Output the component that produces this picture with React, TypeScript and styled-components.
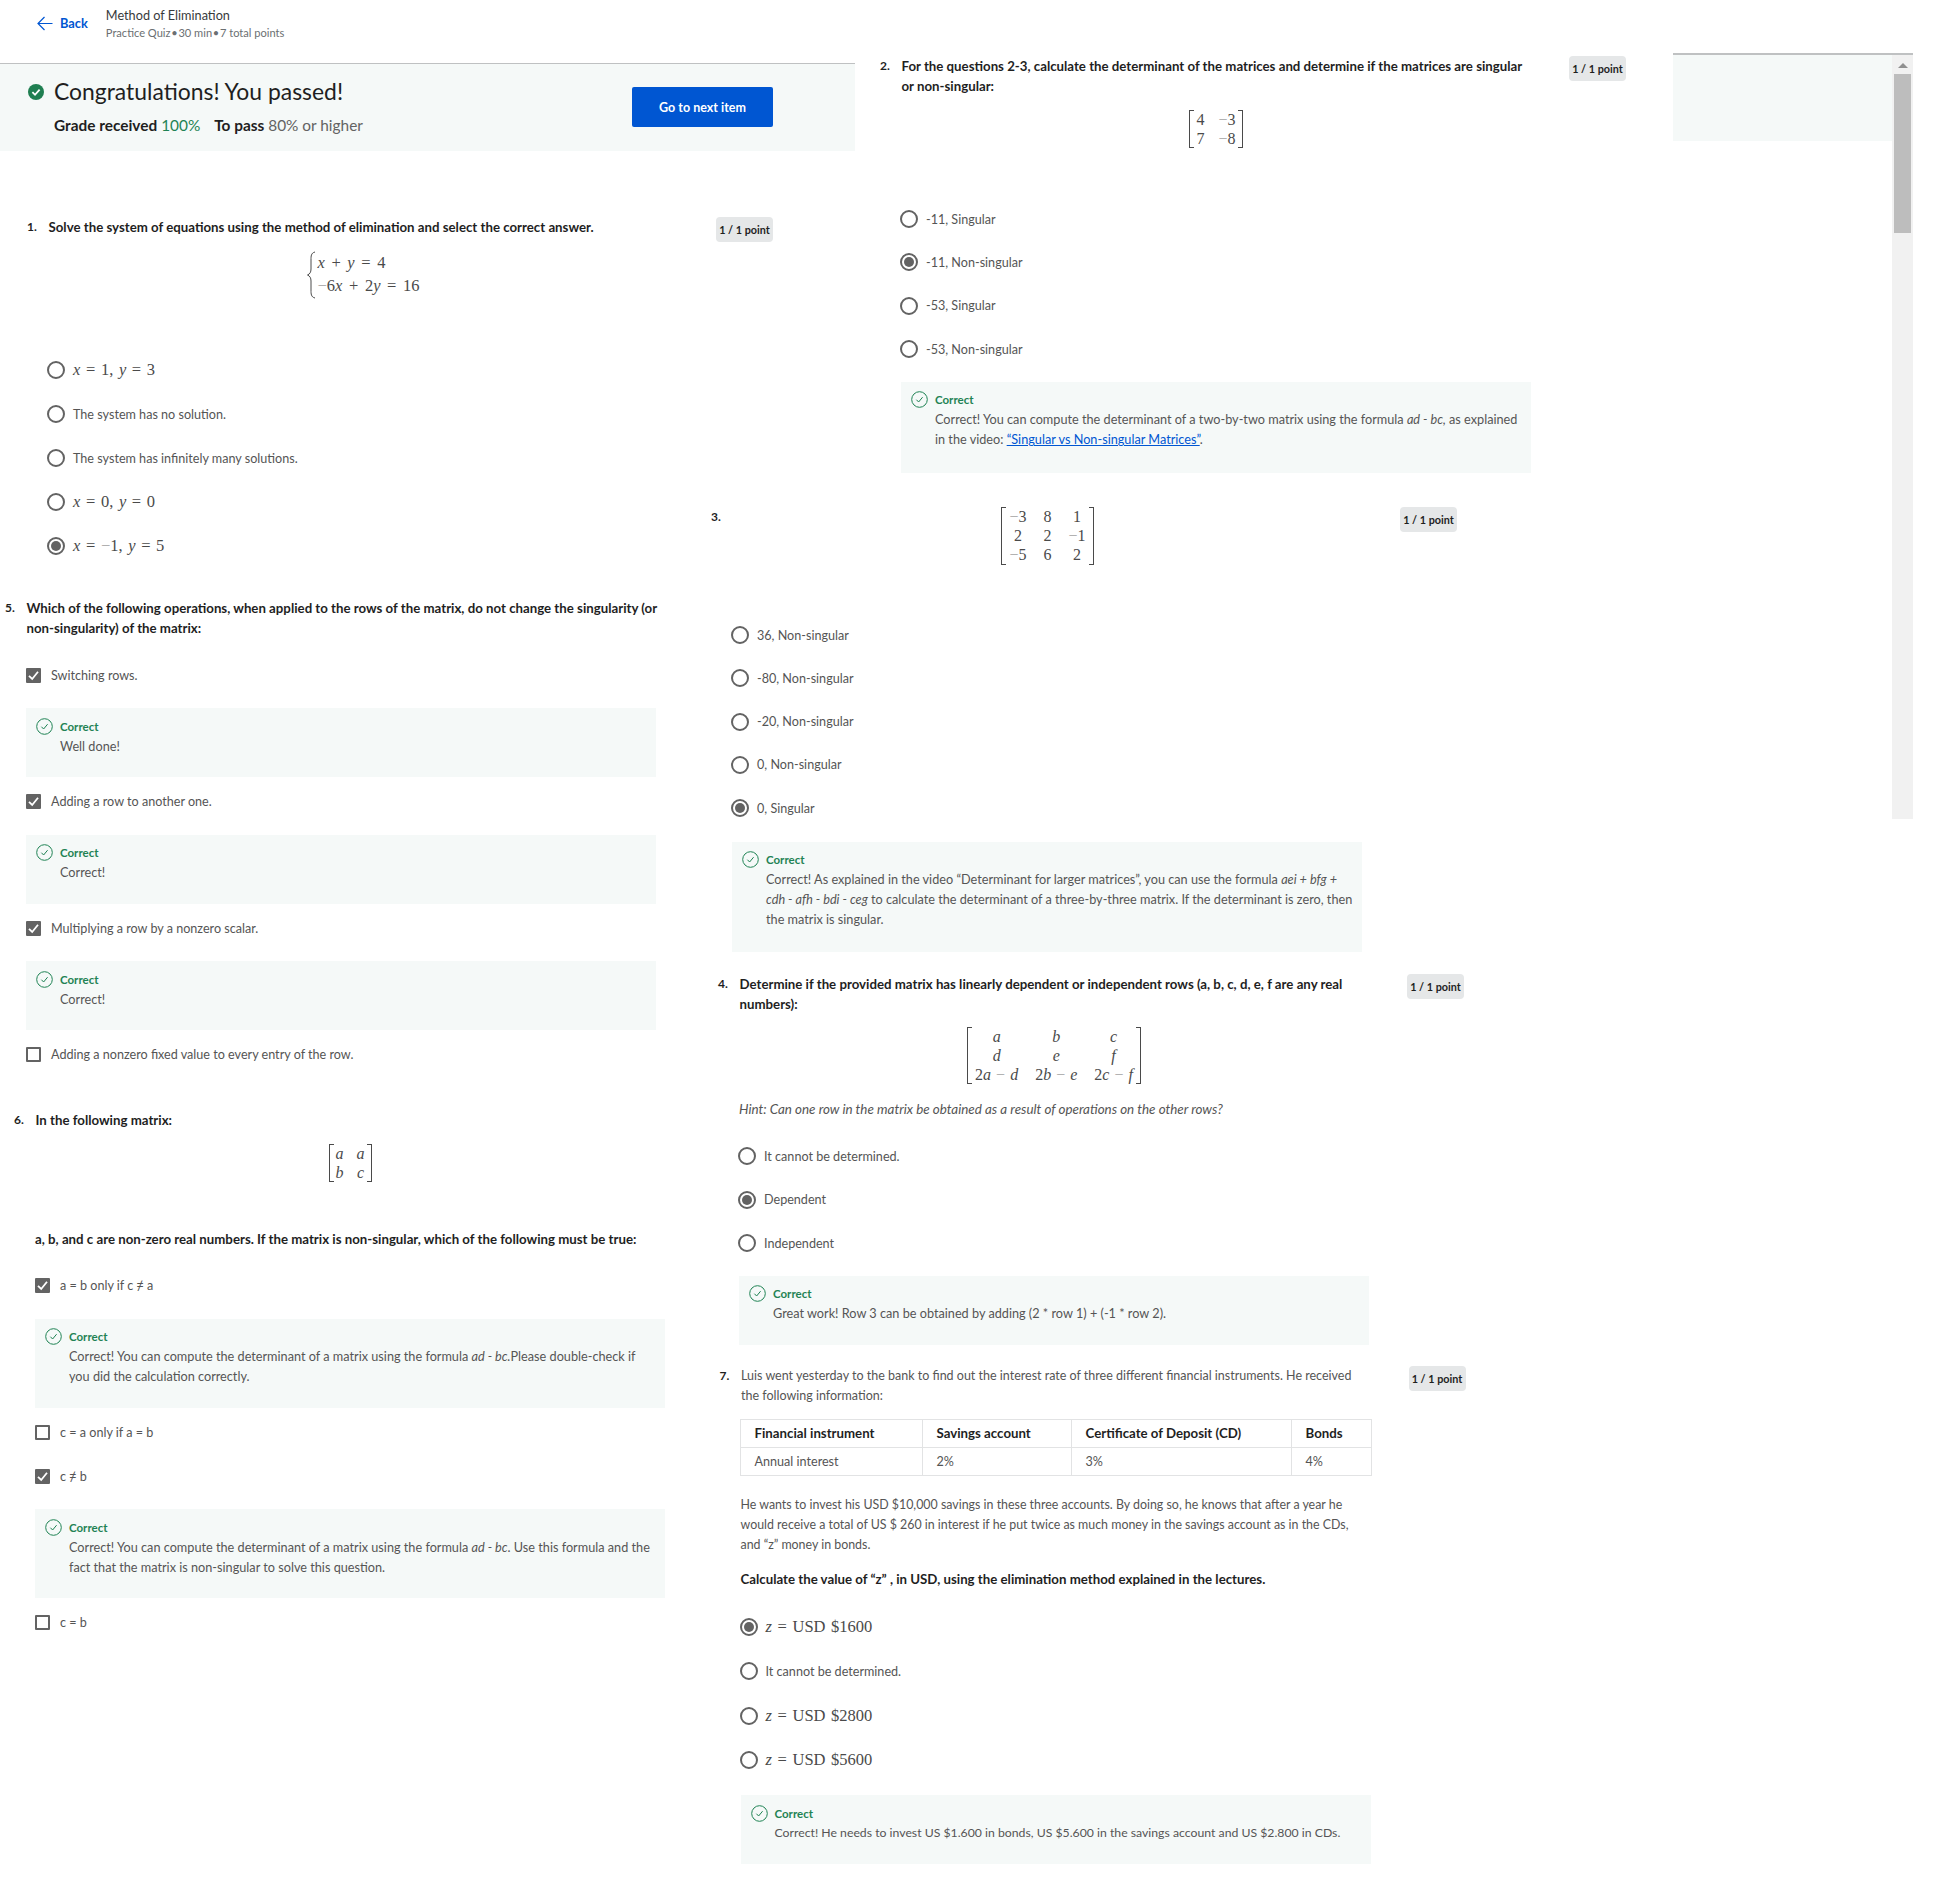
import React from "react";
import styled, { createGlobalStyle } from "styled-components";

const GlobalStyle = createGlobalStyle`
  html, body {
    margin: 0;
    padding: 0;
    background: #fff;
  }
  body {
    font-family: "Lato", "Noto Sans", sans-serif;
    font-size: 12.6px;
    color: #555;
  }
  * {
    box-sizing: border-box;
  }
`;

const Page = styled.div`
  display: flex;
  width: 1946px;
  min-height: 1884px;
  overflow: hidden;
`;

const LeftColumn = styled.div`
  flex: 0 0 700px;
  width: 700px;
`;

const RightColumn = styled.div`
  flex: 0 0 973px;
  width: 973px;
  padding-top: 56px;
`;

const SidePanel = styled.div`
  flex: 0 0 240px;
  display: flex;
  align-items: flex-start;
  height: 766px;
  margin-top: 53px;
  border-top: 2px solid #bfc1c2;
`;

const SideTint = styled.div`
  flex: 1;
  height: 86px;
  background: #f5f9f8;
`;

const ScrollTrack = styled.div`
  flex: 0 0 21px;
  height: 100%;
  padding: 6px 2px 0;
  background: #f1f1f1;
`;

const ScrollArrow = styled.div`
  width: 0;
  height: 0;
  margin: 2px auto 6px;
  border-left: 5px solid transparent;
  border-right: 5px solid transparent;
  border-bottom: 5px solid #8f8f8f;
`;

const ScrollThumb = styled.div`
  height: 159px;
  background: #bdbdbd;
`;

const TopBar = styled.div`
  display: flex;
  align-items: flex-start;
  width: 855px;
  height: 64px;
  padding: 6px 0 0 37px;
  border-bottom: 1px solid #bfc1c2;
`;

const BackLink = styled.div`
  display: flex;
  align-items: center;
  gap: 7px;
  height: 34px;
  color: #0056d2;
  font-weight: 700;
  font-size: 12.8px;
`;

const CourseInfo = styled.div`
  margin-left: 18px;
`;

const CourseTitle = styled.div`
  color: #373a3c;
  font-size: 12.7px;
  line-height: 18px;
`;

const CourseMeta = styled.div`
  color: #6b6f72;
  font-size: 11.1px;
  line-height: 18px;
`;

const PassBand = styled.div`
  display: flex;
  justify-content: space-between;
  align-items: flex-start;
  width: 855px;
  height: 87px;
  padding: 14px 82px 0 28px;
  background: #f5f9f8;
`;

const PassHeading = styled.div`
  display: flex;
  align-items: center;
  gap: 10px;
  height: 26px;
  color: #1f1f1f;
  font-size: 22.9px;
`;

const PassIconSlot = styled.span`
  display: flex;
  margin-top: 1px;
`;

const PassStats = styled.div`
  margin: 10px 0 0 26px;
  font-size: 15.4px;
  line-height: 22px;
  color: #636363;

  b {
    font-weight: 700;
    color: #1f1f1f;
  }

  em {
    font-style: normal;
    color: #1f8354;
    margin-right: 10px;
  }
`;

const NextButton = styled.div`
  display: flex;
  justify-content: center;
  align-items: center;
  width: 141px;
  height: 40px;
  margin-top: 9px;
  border-radius: 2px;
  background: #0056d2;
  color: #fff;
  font-weight: 700;
  font-size: 12.5px;
`;

const Question = styled.div<{ $left: number; $top: number }>`
  width: 746px;
  margin-left: ${(p) => p.$left}px;
  margin-top: ${(p) => p.$top}px;
`;

const Head = styled.div`
  display: flex;
  align-items: flex-start;
`;

const Number = styled.div`
  flex: 0 0 21.5px;
  color: #1f1f1f;
  font-weight: 700;
  font-size: 12px;
  line-height: 20px;
`;

const Title = styled.div<{ $plain?: boolean }>`
  flex: 0 0 630px;
  color: ${(p) => (p.$plain ? "#555" : "#1f1f1f")};
  font-weight: ${(p) => (p.$plain ? 400 : 700)};
  font-size: ${(p) => (p.$plain ? 12.5 : 13.25)}px;
  line-height: 20px;
  white-space: nowrap;
`;

const Points = styled.div`
  display: flex;
  justify-content: center;
  align-items: center;
  width: 57px;
  height: 25px;
  margin-left: auto;
  border-radius: 4px;
  background: #e5e7e8;
  color: #1f1f1f;
  font-weight: 700;
  font-size: 10.8px;
`;

const Body = styled.div`
  width: 630px;
  margin-left: 21px;
`;

const MathBlock = styled.div<{ $top: number }>`
  display: flex;
  justify-content: center;
  margin-top: ${(p) => p.$top}px;
`;

const MatrixWrap = styled.div`
  display: flex;
  align-items: stretch;
  color: #4a4a4a;
  font-family: "Liberation Serif", serif;
  font-size: 16px;
  font-weight: 400;
`;

const Bracket = styled.span<{ $side: "left" | "right" }>`
  flex: 0 0 5px;
  border: 1px solid #4a4a4a;
  border-${(p) => (p.$side === "left" ? "right" : "left")}: none;
`;

const MatrixGrid = styled.div<{ $cols: number; $gap: number; $pad: number }>`
  display: grid;
  grid-template-columns: repeat(${(p) => p.$cols}, auto);
  column-gap: ${(p) => p.$gap}px;
  padding: 0 ${(p) => p.$pad}px;
  justify-items: center;
  line-height: 19.2px;
  word-spacing: 1px;
  white-space: nowrap;
`;

const Var = styled.i`
  font-style: italic;
`;

const Minus = styled.span`
  color: #a8a8a8;
`;

const NotEqual = styled.span`
  font-family: "Noto Sans", sans-serif;
`;

const CasesWrap = styled.div`
  display: flex;
  align-items: stretch;
  gap: 1px;
  color: #4a4a4a;
  font-family: "Liberation Serif", serif;
  font-size: 16.5px;
  line-height: 23px;
  word-spacing: 2.5px;
  white-space: nowrap;
`;

const Options = styled.div<{ $top: number; $step: number }>`
  margin-top: ${(p) => p.$top}px;

  & > div {
    height: ${(p) => p.$step}px;
  }
`;

const OptionRow = styled.div`
  display: flex;
  align-items: center;
  gap: 8px;
  margin-left: -1px;
`;

const RadioMark = styled.span<{ $on?: boolean }>`
  display: flex;
  justify-content: center;
  align-items: center;
  flex: 0 0 18px;
  height: 18px;
  border: 2px solid #636363;
  border-radius: 50%;

  &::after {
    content: "";
    display: ${(p) => (p.$on ? "block" : "none")};
    width: 10px;
    height: 10px;
    border-radius: 50%;
    background: #636363;
  }
`;

const MathLabel = styled.span`
  color: #4a4a4a;
  font-family: "Liberation Serif", serif;
  font-size: 16.5px;
  word-spacing: 1.5px;
  white-space: nowrap;
`;

const CheckRow = styled.div<{ $top?: number; $bottom?: number }>`
  display: flex;
  align-items: center;
  gap: 10px;
  height: 20px;
  margin-top: ${(p) => p.$top ?? 0}px;
  margin-bottom: ${(p) => p.$bottom ?? 23}px;
`;

const CheckMark = styled.span<{ $on?: boolean }>`
  display: flex;
  justify-content: center;
  align-items: center;
  flex: 0 0 15px;
  height: 15px;
  border-radius: 1px;
  border: 2px solid #636363;
  background: ${(p) => (p.$on ? "#636363" : "#fff")};
`;

const Feedback = styled.div<{ $top?: number; $bottom?: number; $tail?: number }>`
  display: grid;
  grid-template-columns: 17px 1fr;
  column-gap: 7px;
  width: 630px;
  margin-top: ${(p) => p.$top ?? 0}px;
  margin-bottom: ${(p) => p.$bottom ?? 14.5}px;
  padding: 8.5px 10px ${(p) => p.$tail ?? 21.5}px;
  background: #f5f9f8;
`;

const IconSlot = styled.span`
  display: flex;
  margin-top: 1px;
`;

const CorrectLabel = styled.div`
  color: #1f8354;
  font-weight: 700;
  font-size: 11.5px;
  line-height: 19px;
`;

const FeedbackText = styled.div<{ $size?: number }>`
  grid-column: 2;
  font-size: ${(p) => p.$size ?? 12.7}px;
  line-height: 20px;
  white-space: nowrap;

  a {
    color: #0056d2;
    text-decoration: underline;
  }
`;

const Prompt = styled.div<{ $top: number; $bold?: boolean; $italic?: boolean }>`
  margin-top: ${(p) => p.$top}px;
  color: ${(p) => (p.$bold ? "#1f1f1f" : "#555")};
  font-weight: ${(p) => (p.$bold ? 700 : 400)};
  font-style: ${(p) => (p.$italic ? "italic" : "normal")};
  font-size: ${(p) => (p.$bold ? 13.25 : p.$italic ? 13.4 : 12.4)}px;
  line-height: 20px;
  white-space: nowrap;
`;

const InfoTable = styled.table`
  width: 631px;
  margin-top: 13px;
  margin-left: -1px;
  border-collapse: collapse;
  table-layout: fixed;

  th,
  td {
    height: 28px;
    padding: 0 14px;
    border: 1px solid #e2e3e4;
    text-align: left;
    white-space: nowrap;
  }

  th {
    color: #1f1f1f;
    font-weight: 700;
    font-size: 13.25px;
  }
`;

const BackArrow = () => (
  <svg width="16" height="15" viewBox="0 0 16 15" fill="none" stroke="#0056d2" strokeWidth="1.2">
    <path d="M15.5 7.5H1M7.5 1L1 7.5L7.5 14" />
  </svg>
);

const PassIcon = () => (
  <svg width="16" height="16" viewBox="0 0 16 16">
    <circle cx="8" cy="8" r="8" fill="#1f7f51" />
    <path d="M4.4 8.2L7 10.8L11.6 5.6" fill="none" stroke="#fff" strokeWidth="1.8" />
  </svg>
);

const CorrectIcon = () => (
  <svg width="17" height="17" viewBox="0 0 17 17" fill="none" stroke="#1f8354">
    <circle cx="8.5" cy="8.5" r="7.8" strokeWidth="1" />
    <path d="M5.4 8.7L7.6 11L11.6 6.2" strokeWidth="1" />
  </svg>
);

const TickIcon = () => (
  <svg width="11" height="11" viewBox="0 0 11 11" fill="none" stroke="#fff" strokeWidth="1.8">
    <path d="M1 5.8L4.2 9L10 1.8" />
  </svg>
);

const BraceIcon = () => (
  <svg width="10" height="48" viewBox="0 0 10 48" fill="none" stroke="#4a4a4a" strokeWidth="1">
    <path d="M9 1C5 2 5 5 5 9V18C5 21 4 23 1.5 24C4 25 5 27 5 30V39C5 43 5 46 9 47" />
  </svg>
);

const Radio = ({ on, children }: { on?: boolean; children: React.ReactNode }) => (
  <OptionRow>
    <RadioMark $on={on} />
    {children}
  </OptionRow>
);

const Check = ({
  on,
  top,
  bottom,
  children,
}: {
  on?: boolean;
  top?: number;
  bottom?: number;
  children: React.ReactNode;
}) => (
  <CheckRow $top={top} $bottom={bottom}>
    <CheckMark $on={on}>{on && <TickIcon />}</CheckMark>
    <span>{children}</span>
  </CheckRow>
);

const Correct = ({
  top,
  bottom,
  size,
  tail,
  children,
}: {
  top?: number;
  bottom?: number;
  size?: number;
  tail?: number;
  children: React.ReactNode;
}) => (
  <Feedback $top={top} $bottom={bottom} $tail={tail}>
    <IconSlot>
      <CorrectIcon />
    </IconSlot>
    <CorrectLabel>Correct</CorrectLabel>
    <FeedbackText $size={size}>{children}</FeedbackText>
  </Feedback>
);

const Matrix = ({
  cols,
  gap,
  pad,
  cells,
}: {
  cols: number;
  gap: number;
  pad: number;
  cells: React.ReactNode[];
}) => (
  <MatrixWrap>
    <Bracket $side="left" />
    <MatrixGrid $cols={cols} $gap={gap} $pad={pad}>
      {cells.map((cell, index) => (
        <span key={index}>{cell}</span>
      ))}
    </MatrixGrid>
    <Bracket $side="right" />
  </MatrixWrap>
);

const neg = (value: string) => (
  <>
    <Minus>−</Minus>
    {value}
  </>
);

const App = () => {
  return (
    <Page>
      <GlobalStyle />
      <LeftColumn>
        <TopBar>
          <BackLink>
            <BackArrow />
            Back
          </BackLink>
          <CourseInfo>
            <CourseTitle>Method of Elimination</CourseTitle>
            <CourseMeta>Practice Quiz{"\u200a"}•{"\u200a"}30 min{"\u200a"}•{"\u200a"}7 total points</CourseMeta>
          </CourseInfo>
        </TopBar>
        <PassBand>
          <div>
            <PassHeading>
              <PassIconSlot>
                <PassIcon />
              </PassIconSlot>
              Congratulations! You passed!
            </PassHeading>
            <PassStats>
              <b>Grade received</b> <em>100%</em> <b>To pass</b> 80% or higher
            </PassStats>
          </div>
          <NextButton>Go to next item</NextButton>
        </PassBand>

        <Question $left={27} $top={66}>
          <Head>
            <Number>1.</Number>
            <Title>Solve the system of equations using the method of elimination and select the correct answer.</Title>
            <Points>1 / 1 point</Points>
          </Head>
          <Body>
            <MathBlock $top={9}>
              <CasesWrap>
                <BraceIcon />
                <div>
                  <Var>x</Var> + <Var>y</Var> = 4
                  <br />
                  <Minus>−</Minus>6<Var>x</Var> + 2<Var>y</Var> = 16
                </div>
              </CasesWrap>
            </MathBlock>
            <Options $top={49} $step={44}>
              <Radio>
                <MathLabel>
                  <Var>x</Var> = 1, <Var>y</Var> = 3
                </MathLabel>
              </Radio>
              <Radio>The system has no solution.</Radio>
              <Radio>The system has infinitely many solutions.</Radio>
              <Radio>
                <MathLabel>
                  <Var>x</Var> = 0, <Var>y</Var> = 0
                </MathLabel>
              </Radio>
              <Radio on>
                <MathLabel>
                  <Var>x</Var> = <Minus>−</Minus>1, <Var>y</Var> = 5
                </MathLabel>
              </Radio>
            </Options>
          </Body>
        </Question>

        <Question $left={5} $top={30}>
          <Head>
            <Number>5.</Number>
            <Title>
              Which of the following operations, when applied to the rows of the matrix, do not change the singularity (or
              <br />
              non-singularity) of the matrix:
            </Title>
          </Head>
          <Body>
            <Check on top={27}>
              Switching rows.
            </Check>
            <Correct>Well done!</Correct>
            <Check on>Adding a row to another one.</Check>
            <Correct>Correct!</Correct>
            <Check on>Multiplying a row by a nonzero scalar.</Check>
            <Correct>Correct!</Correct>
            <Check bottom={0}>Adding a nonzero fixed value to every entry of the row.</Check>
          </Body>
        </Question>

        <Question $left={14} $top={45}>
          <Head>
            <Number>6.</Number>
            <Title>In the following matrix:</Title>
          </Head>
          <Body>
            <MathBlock $top={14}>
              <Matrix
                cols={2}
                gap={13}
                pad={2}
                cells={[<Var>a</Var>, <Var>a</Var>, <Var>b</Var>, <Var>c</Var>]}
              />
            </MathBlock>
            <Prompt $top={47} $bold>
              a, b, and c are non-zero real numbers. If the matrix is non-singular, which of the following must be true:
            </Prompt>
            <Check on top={27}>
              a = b only if c <NotEqual>≠</NotEqual> a
            </Check>
            <Correct>
              Correct! You can compute the determinant of a matrix using the formula <Var>ad - bc.</Var>Please double-check if
              <br />
              you did the calculation correctly.
            </Correct>
            <Check bottom={24}>c = a only if a = b</Check>
            <Check on>
              c <NotEqual>≠</NotEqual> b
            </Check>
            <Correct>
              Correct! You can compute the determinant of a matrix using the formula <Var>ad - bc</Var>. Use this formula and the
              <br />
              fact that the matrix is non-singular to solve this question.
            </Correct>
            <Check bottom={0}>c = b</Check>
          </Body>
        </Question>
      </LeftColumn>

      <RightColumn>
        <Question $left={180} $top={0}>
          <Head>
            <Number>2.</Number>
            <Title>
              For the questions 2-3, calculate the determinant of the matrices and determine if the matrices are singular
              <br />
              or non-singular:
            </Title>
            <Points>1 / 1 point</Points>
          </Head>
          <Body>
            <MathBlock $top={14}>
              <Matrix cols={2} gap={14} pad={2} cells={["4", neg("3"), "7", neg("8")]} />
            </MathBlock>
            <Options $top={49} $step={43.4}>
              <Radio>-11, Singular</Radio>
              <Radio on>-11, Non-singular</Radio>
              <Radio>-53, Singular</Radio>
              <Radio>-53, Non-singular</Radio>
            </Options>
            <Correct top={11} bottom={0} tail={23.5}>
              Correct! You can compute the determinant of a two-by-two matrix using the formula <Var>ad - bc,</Var> as explained
              <br />
              in the video: <a href="#video">“Singular vs Non-singular Matrices”</a>.
            </Correct>
          </Body>
        </Question>

        <Question $left={11} $top={34}>
          <Head>
            <Number>3.</Number>
            <Title>
              <MathBlock $top={0}>
                <Matrix
                  cols={3}
                  gap={17}
                  pad={3}
                  cells={[neg("3"), "8", "1", "2", "2", neg("1"), neg("5"), "6", "2"]}
                />
              </MathBlock>
            </Title>
            <Points>1 / 1 point</Points>
          </Head>
          <Body>
            <Options $top={49} $step={43.25}>
              <Radio>36, Non-singular</Radio>
              <Radio>-80, Non-singular</Radio>
              <Radio>-20, Non-singular</Radio>
              <Radio>0, Non-singular</Radio>
              <Radio on>0, Singular</Radio>
            </Options>
            <Correct top={12} bottom={0} tail={22.5}>
              Correct! As explained in the video “Determinant for larger matrices”, you can use the formula <Var>aei + bfg +</Var>
              <br />
              <Var>cdh - afh - bdi - ceg</Var> to calculate the determinant of a three-by-three matrix. If the determinant is zero, then
              <br />
              the matrix is singular.
            </Correct>
          </Body>
        </Question>

        <Question $left={18} $top={22}>
          <Head>
            <Number>4.</Number>
            <Title>
              Determine if the provided matrix has linearly dependent or independent rows (a, b, c, d, e, f are any real
              <br />
              numbers):
            </Title>
            <Points>1 / 1 point</Points>
          </Head>
          <Body>
            <MathBlock $top={13}>
              <Matrix
                cols={3}
                gap={17}
                pad={3}
                cells={[
                  <Var>a</Var>,
                  <Var>b</Var>,
                  <Var>c</Var>,
                  <Var>d</Var>,
                  <Var>e</Var>,
                  <Var>f</Var>,
                  <>
                    2<Var>a</Var> <Minus>−</Minus> <Var>d</Var>
                  </>,
                  <>
                    2<Var>b</Var> <Minus>−</Minus> <Var>e</Var>
                  </>,
                  <>
                    2<Var>c</Var> <Minus>−</Minus> <Var>f</Var>
                  </>,
                ]}
              />
            </MathBlock>
            <Prompt $top={15} $italic>
              Hint: Can one row in the matrix be obtained as a result of operations on the other rows?
            </Prompt>
            <Options $top={15} $step={43.5}>
              <Radio>It cannot be determined.</Radio>
              <Radio on>Dependent</Radio>
              <Radio>Independent</Radio>
            </Options>
            <Correct top={11} bottom={0}>
              Great work! Row 3 can be obtained by adding (2 * row 1) + (-1 * row 2).
            </Correct>
          </Body>
        </Question>

        <Question $left={19.5} $top={21}>
          <Head>
            <Number>7.</Number>
            <Title $plain>
              Luis went yesterday to the bank to find out the interest rate of three different financial instruments. He received
              <br />
              the following information:
            </Title>
            <Points>1 / 1 point</Points>
          </Head>
          <Body>
            <InfoTable>
              <colgroup>
                <col width="182" />
                <col width="149" />
                <col width="220" />
                <col width="80" />
              </colgroup>
              <thead>
                <tr>
                  <th>Financial instrument</th>
                  <th>Savings account</th>
                  <th>Certificate of Deposit (CD)</th>
                  <th>Bonds</th>
                </tr>
              </thead>
              <tbody>
                <tr>
                  <td>Annual interest</td>
                  <td>2%</td>
                  <td>3%</td>
                  <td>4%</td>
                </tr>
              </tbody>
            </InfoTable>
            <Prompt $top={19}>
              He wants to invest his USD $10,000 savings in these three accounts. By doing so, he knows that after a year he
              <br />
              would receive a total of US $ 260 in interest if he put twice as much money in the savings account as in the CDs,
              <br />
              and “z” money in bonds.
            </Prompt>
            <Prompt $top={14} $bold>
              Calculate the value of “z” , in USD, using the elimination method explained in the lectures.
            </Prompt>
            <Options $top={16} $step={44.3}>
              <Radio on>
                <MathLabel>
                  <Var>z</Var> = USD $1600
                </MathLabel>
              </Radio>
              <Radio>It cannot be determined.</Radio>
              <Radio>
                <MathLabel>
                  <Var>z</Var> = USD $2800
                </MathLabel>
              </Radio>
              <Radio>
                <MathLabel>
                  <Var>z</Var> = USD $5600
                </MathLabel>
              </Radio>
            </Options>
            <Correct top={13} bottom={0} size={12.25}>
              Correct! He needs to invest US $1.600 in bonds, US $5.600 in the savings account and US $2.800 in CDs.
            </Correct>
          </Body>
        </Question>
      </RightColumn>

      <SidePanel>
        <SideTint />
        <ScrollTrack>
          <ScrollArrow />
          <ScrollThumb />
        </ScrollTrack>
      </SidePanel>
    </Page>
  );
};

export default App;
